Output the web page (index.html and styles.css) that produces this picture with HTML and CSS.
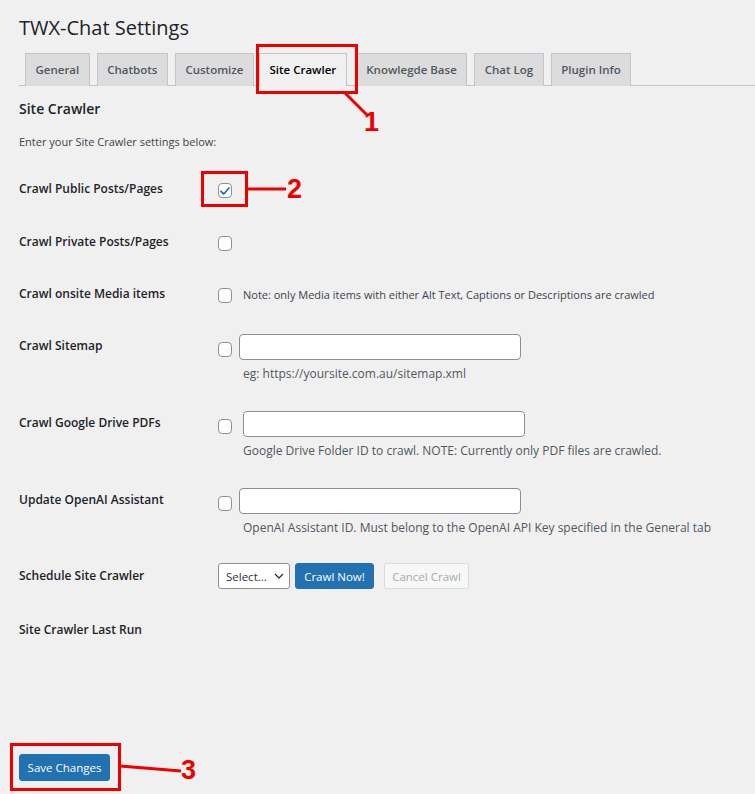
FILE: index.html
```html
<!DOCTYPE html>
<html>
<head>
<meta charset="utf-8">
<link rel="stylesheet" href="styles.css">
</head>
<body>
<div class="wrap">
  <h1 class="title">TWX-Chat Settings</h1>
  <nav class="tabs">
    <a class="tab">General</a>
    <a class="tab">Chatbots</a>
    <a class="tab">Customize</a>
    <a class="tab active">Site Crawler</a>
    <a class="tab">Knowlegde Base</a>
    <a class="tab">Chat Log</a>
    <a class="tab">Plugin Info</a>
  </nav>
  <h2 class="section-title">Site Crawler</h2>
  <p class="intro">Enter your Site Crawler settings below:</p>

  <div class="form">
    <div class="row h53">
      <div class="label">Crawl Public Posts/Pages</div>
      <div class="field"><span class="cb checked"><svg viewBox="0 0 16 16" width="16" height="16"><path d="M4 8.3 L6.8 11 L12 5" fill="none" stroke="#2271b1" stroke-width="1.8" stroke-linecap="round" stroke-linejoin="round"/></svg></span></div>
    </div>
    <div class="row h52">
      <div class="label">Crawl Private Posts/Pages</div>
      <div class="field"><span class="cb"></span></div>
    </div>
    <div class="row h52">
      <div class="label">Crawl onsite Media items</div>
      <div class="field"><span class="cb"></span><span class="note">Note: only Media items with either Alt Text, Captions or Descriptions are crawled</span></div>
    </div>
    <div class="row h77">
      <div class="label">Crawl Sitemap</div>
      <div class="field col">
        <div class="line"><span class="cb low"></span><span class="input"></span></div>
        <div class="desc">eg: https://yoursite.com.au/sitemap.xml</div>
      </div>
    </div>
    <div class="row h77">
      <div class="label">Crawl Google Drive PDFs</div>
      <div class="field col">
        <div class="line"><span class="cb low"></span><span class="input wide-gap"></span></div>
        <div class="desc">Google Drive Folder ID to crawl. NOTE: Currently only PDF files are crawled.</div>
      </div>
    </div>
    <div class="row h76">
      <div class="label">Update OpenAI Assistant</div>
      <div class="field col">
        <div class="line"><span class="cb low"></span><span class="input"></span></div>
        <div class="desc">OpenAI Assistant ID. Must belong to the OpenAI API Key specified in the General tab</div>
      </div>
    </div>
    <div class="row h54">
      <div class="label">Schedule Site Crawler</div>
      <div class="field buttons">
        <span class="select">Select...<svg width="10" height="6" viewBox="0 0 10 6"><path d="M1 1 L5 5 L9 1" fill="none" stroke="#2c3338" stroke-width="1.3"/></svg></span>
        <span class="btn primary">Crawl Now!</span>
        <span class="btn disabled">Cancel Crawl</span>
      </div>
    </div>
    <div class="row">
      <div class="label">Site Crawler Last Run</div>
      <div class="field"></div>
    </div>
  </div>

  <div class="submit"><span class="btn primary save">Save Changes</span></div>
</div>

<div class="anno box1"></div>
<div class="anno box2"></div>
<div class="anno box3"></div>
<svg class="anno-lines" width="755" height="794" viewBox="0 0 755 794">
  <line x1="344" y1="92" x2="368" y2="116" stroke="#ee0000" stroke-width="3"/>
  <line x1="247" y1="189" x2="286" y2="189" stroke="#ee0000" stroke-width="3"/>
  <line x1="120" y1="766" x2="181" y2="771" stroke="#ee0000" stroke-width="3"/>
</svg>
<span class="num n1">1</span>
<span class="num n2">2</span>
<span class="num n3">3</span>
</body>
</html>
```

FILE: styles.css
```css
* { box-sizing: border-box; }
html, body { margin: 0; padding: 0; }
body {
  background: #f0f0f1;
  color: #3c434a;
  font-family: "Open Sans", "Noto Sans", sans-serif;
  font-size: 12px;
  width: 755px;
  height: 794px;
  overflow: hidden;
  position: relative;
}
.wrap { padding-left: 19px; }
.title {
  font-size: 20px;
  font-weight: 400;
  color: #1d2327;
  margin: 0;
  padding-top: 13px;
  line-height: 30px;
  height: 53px;
}
.tabs {
  display: flex;
  border-bottom: 1px solid #c3c4c7;
  padding-left: 6px;
  gap: 7px;
  height: 33px;
}
.tab {
  display: block;
  height: 33px;
  padding: 0 9.5px;
  line-height: 32px;
  font-size: 11.5px;
  font-weight: 600;
  color: #50575e;
  background: #dcdcde;
  border: 1px solid #c3c4c7;
  border-bottom: none;
  white-space: nowrap;
}
.tab.active {
  background: #f0f0f1;
  color: #000;
  margin-left: -2px;
  margin-right: 2px;
}
.section-title {
  margin: 0;
  font-size: 14px;
  font-weight: 600;
  color: #1d2327;
  line-height: 20px;
  padding-top: 13px;
}
.intro {
  margin: 0;
  padding-top: 14px;
  line-height: 18px;
  font-size: 11px;
  color: #3c434a;
  height: 61px;
}
.form { display: flex; flex-direction: column; }
.row { display: flex; align-items: flex-start; }
.h52 { height: 52px; }
.h53 { height: 53px; }
.h54 { height: 54px; }
.h76 { height: 76px; }
.h77 { height: 77px; }
.label {
  width: 199px;
  flex: none;
  font-size: 12px;
  font-weight: 600;
  color: #1d2327;
  line-height: 18px;
}
.field { display: flex; align-items: center; height: 18px; }
.field.col { flex-direction: column; align-items: flex-start; height: auto; margin-top: -3px; }
.line { display: flex; align-items: center; height: 26px; }
.cb {
  display: inline-block;
  width: 14px;
  height: 15px;
  margin-top: 2px;
  border: 1px solid #8c8f94;
  border-radius: 4px;
  background: #fff;
  flex: none;
  position: relative;
}
.cb svg { position: absolute; left: -2px; top: -1px; width: 16px; height: 16px; }
.cb.low { margin-top: 5px; }
.note { margin-left: 11px; font-size: 11px; color: #3c434a; }
.input {
  display: block;
  width: 282px;
  height: 26px;
  margin-left: 7px;
  border: 1px solid #8c8f94;
  border-radius: 4px;
  background: #fff;
}
.input.wide-gap { margin-left: 11px; }
.desc {
  margin-top: 5px;
  margin-left: 25px;
  font-size: 12px;
  color: #50575e;
  line-height: 18px;
}
.buttons { height: 26px; margin-top: -4px; gap: 5px; }
.select {
  display: flex;
  align-items: center;
  justify-content: space-between;
  width: 72px;
  height: 26px;
  padding: 0 5px 0 7px;
  border: 1px solid #8c8f94;
  border-radius: 3px;
  background: #fff;
  font-size: 11.5px;
  color: #2c3338;
  white-space: nowrap;
}
.btn {
  display: inline-flex;
  align-items: center;
  justify-content: center;
  height: 26px;
  border-radius: 3px;
  font-size: 11.5px;
  padding: 0;
  border: 1px solid transparent;
  white-space: nowrap;
}
.btn.primary { background: #2271b1; border-color: #2271b1; color: #fff; width: 79px; }
.btn.disabled { background: #f6f7f7; border-color: #dcdcde; color: #a7aaad; width: 85px; margin-left: 5px; }
.submit { padding-top: 115px; }
.btn.save { width: 91px; height: 27px; }

.anno { position: absolute; border: 3px solid #ee0000; }
.box1 { left: 256px; top: 44px; width: 102px; height: 50px; }
.box2 { left: 201px; top: 171px; width: 47px; height: 36px; }
.box3 { left: 10px; top: 743px; width: 111px; height: 48px; }
.anno-lines { position: absolute; left: 0; top: 0; pointer-events: none; }
.num {
  position: absolute;
  color: #ee0000;
  font-family: "Liberation Sans", Arial, sans-serif;
  font-weight: 700;
  font-size: 27px;
  line-height: 1;
}
.n1 { left: 364px; top: 109px; }
.n2 { left: 287px; top: 176px; }
.n3 { left: 181px; top: 757px; }
```
